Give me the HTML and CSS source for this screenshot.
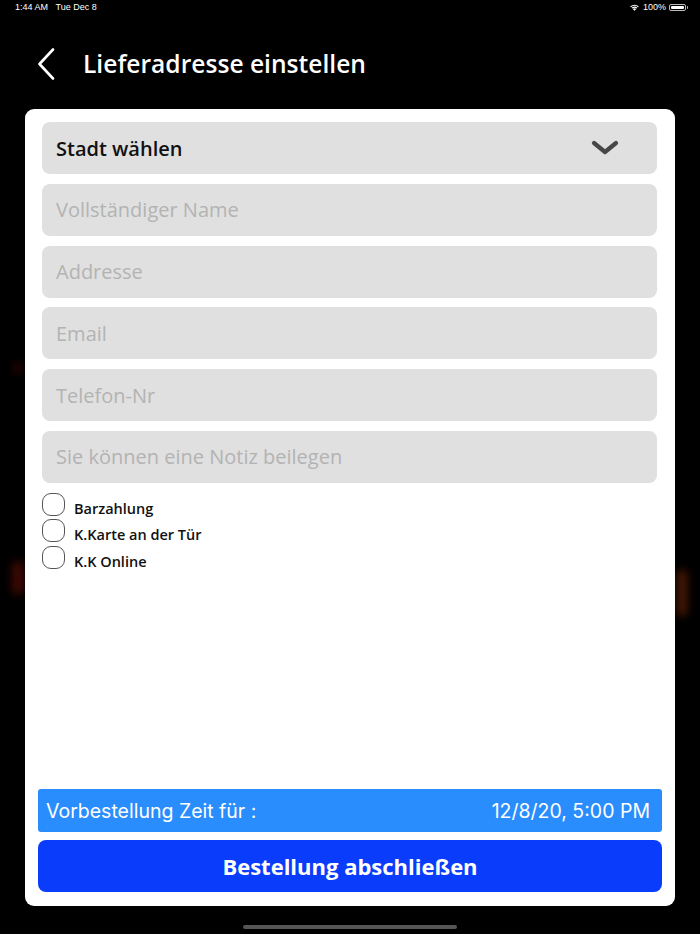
FILE: index.html
```html
<!DOCTYPE html>
<html lang="de">
<head>
<meta charset="utf-8">
<title>Lieferadresse einstellen</title>
<link rel="stylesheet" href="styles.css">
</head>
<body>
<div class="screen">
  <div class="glow glow-a"></div>
  <div class="glow glow-b"></div>
  <div class="glow glow-c"></div>

  <div class="status">
    <span class="status-left">1:44 AM&nbsp;&nbsp;&nbsp;Tue Dec 8</span>
    <span class="status-right">
      <svg class="wifi" width="11" height="8" viewBox="0 0 11 8"><path d="M5.5 7.8 L3.8 6 A2.5 2.5 0 0 1 7.2 6 Z" fill="#fff"/><path d="M2.6 4.8 A4.2 4.2 0 0 1 8.4 4.8 L7.6 5.6 A3.1 3.1 0 0 0 3.4 5.6 Z" fill="#fff"/><path d="M1.2 3.4 A6.2 6.2 0 0 1 9.8 3.4 L9 4.2 A5 5 0 0 0 2 4.2 Z" fill="#fff"/></svg>
      <span>100%</span>
      <span class="battery"><span class="battery-fill"></span></span>
    </span>
  </div>

  <header class="header">
    <svg class="back" width="18" height="32" viewBox="0 0 18 32"><path d="M16 1.5 L2.5 16 L16 30.5" fill="none" stroke="#fff" stroke-width="2.6" stroke-linecap="round" stroke-linejoin="round"/></svg>
    <h1 class="title">Lieferadresse einstellen</h1>
  </header>

  <main class="card">
    <div class="fields">
      <div class="field select">
        <span class="select-text">Stadt wählen</span>
        <svg class="chev" width="28" height="16" viewBox="0 0 28 16"><path d="M3 3 L14 12 L25 3" fill="none" stroke="#474747" stroke-width="4.2" stroke-linecap="round" stroke-linejoin="round"/></svg>
      </div>
      <input class="field" type="text" placeholder="Vollständiger Name">
      <input class="field" type="text" placeholder="Addresse">
      <input class="field" type="text" placeholder="Email">
      <input class="field" type="text" placeholder="Telefon-Nr">
      <input class="field" type="text" placeholder="Sie können eine Notiz beilegen">
    </div>

    <div class="options">
      <label class="option"><span class="box"></span><span class="opt-text">Barzahlung</span></label>
      <label class="option"><span class="box"></span><span class="opt-text">K.Karte an der Tür</span></label>
      <label class="option"><span class="box"></span><span class="opt-text">K.K Online</span></label>
    </div>

    <div class="spacer"></div>

    <div class="preorder">
      <span>Vorbestellung Zeit für :</span>
      <span>12/8/20, 5:00 PM</span>
    </div>
    <button class="submit" type="button">Bestellung abschließen</button>
  </main>

  <div class="home-bar"><span class="home-indicator"></span></div>
</div>
</body>
</html>
```

FILE: styles.css
```css
html, body {
  margin: 0;
  padding: 0;
  background: #000;
}

.screen {
  position: relative;
  width: 700px;
  height: 934px;
  background: #000;
  display: flex;
  flex-direction: column;
  font-family: "Open Sans", "Liberation Sans", sans-serif;
  overflow: hidden;
}

.glow {
  position: absolute;
  background: #6a1006;
  filter: blur(4px);
  opacity: 0.6;
  border-radius: 4px;
}
.glow-a { left: 14px; top: 362px; width: 8px; height: 12px; opacity: 0.4; }
.glow-b { left: 12px; top: 562px; width: 12px; height: 32px; }
.glow-c { left: 677px; top: 570px; width: 10px; height: 46px; background: #7a2a08; }

.status {
  height: 14px;
  display: flex;
  justify-content: space-between;
  align-items: center;
  padding: 0 14px 0 15px;
  color: #fff;
  font-family: "Liberation Sans", Arial, sans-serif;
  font-size: 9px;
  position: relative;
}
.status-right {
  display: flex;
  align-items: center;
  gap: 3px;
}
.battery {
  width: 17px;
  height: 7px;
  border: 1px solid #bbb;
  border-radius: 2px;
  padding: 1px;
  box-sizing: border-box;
  display: flex;
  position: relative;
}
.battery::after {
  content: "";
  position: absolute;
  right: -3px;
  top: 1.5px;
  width: 1.5px;
  height: 2.5px;
  background: #bbb;
  border-radius: 0 1px 1px 0;
}
.battery-fill {
  flex: 1;
  background: #fff;
  border-radius: 1px;
}

.header {
  height: 95px;
  display: flex;
  align-items: center;
  padding-left: 37px;
  gap: 28px;
  position: relative;
}
.back { margin-top: 5px; }
.title {
  margin: 0;
  margin-top: 4px;
  color: #fff;
  font-size: 24.6px;
  font-weight: 600;
  letter-spacing: 0;
}

.card {
  position: relative;
  margin: 0 25px;
  height: 797px;
  box-sizing: border-box;
  background: #fff;
  border-radius: 9px;
  padding: 13px 13px 14px;
  display: flex;
  flex-direction: column;
}

.fields {
  display: flex;
  flex-direction: column;
  gap: 9.8px;
  padding: 0 5px 0 4px;
}
.field {
  height: 52px;
  box-sizing: border-box;
  border: none;
  outline: none;
  background: #e0e0e0;
  border-radius: 8px;
  padding: 0 14px;
  font-family: "Open Sans", "Liberation Sans", sans-serif;
  font-size: 20px;
  color: #111;
  width: 100%;
}
.field::placeholder {
  color: #b3b3b3;
  opacity: 1;
}
.select {
  display: flex;
  align-items: center;
  justify-content: space-between;
  padding-right: 38px;
}
.select-text {
  font-weight: 600;
  color: #111;
}

.options {
  display: flex;
  flex-direction: column;
  gap: 3.5px;
  padding: 10px 0 0 4px;
}
.option {
  display: flex;
  align-items: center;
  height: 23px;
  gap: 9px;
}
.box {
  width: 23px;
  height: 23px;
  box-sizing: border-box;
  border: 1px solid #555;
  border-radius: 9px;
}
.opt-text {
  font-size: 14.5px;
  font-weight: 600;
  color: #111;
  margin-top: 8px;
}

.spacer { flex: 1; }

.preorder {
  height: 43px;
  background: #2a8dfd;
  border-radius: 3px;
  display: flex;
  justify-content: space-between;
  align-items: center;
  padding: 0 12px 0 8px;
  color: #fff;
  font-family: Inter, "Liberation Sans", sans-serif;
  font-size: 19.5px;
  font-weight: 400;
}

.submit {
  margin-top: 8px;
  height: 52px;
  border: none;
  border-radius: 8px;
  background: #0a3dfb;
  color: #fff;
  font-family: "Open Sans", "Liberation Sans", sans-serif;
  font-size: 22px;
  font-weight: 700;
  padding: 0;
}

.home-bar {
  flex: 1;
  display: flex;
  justify-content: center;
  align-items: flex-end;
  padding-bottom: 5px;
}
.home-indicator {
  width: 214px;
  height: 4px;
  border-radius: 2px;
  background: #555;
}
```
